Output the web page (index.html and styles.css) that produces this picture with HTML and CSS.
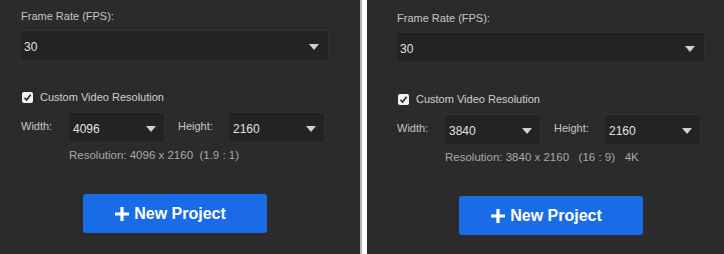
FILE: index.html
```html
<!DOCTYPE html>
<html lang="en">
<head>
    <meta charset="UTF-8">
    <meta name="viewport" content="width=device-width, initial-scale=1.0">
    <title>New Project Settings</title>
    <link rel="stylesheet" href="styles.css">
</head>
<body>
    <div class="compare">
        <section class="panel panel-left">
            <div class="field-label">Frame Rate (FPS):</div>
            <div class="select select-wide">
                <span class="select-value">30</span>
                <span class="arrow"></span>
            </div>

            <label class="check-row">
                <span class="check">
                    <svg width="9" height="9" viewBox="0 0 9 9"><path d="M1.5 4.8 L3.6 7 L7.6 1.8" fill="none" stroke="#222" stroke-width="1.6"/></svg>
                </span>
                Custom Video Resolution
            </label>

            <div class="size-row">
                <span class="size-label">Width:</span>
                <div class="select select-small">
                    <span class="select-value">4096</span>
                    <span class="arrow"></span>
                </div>
                <span class="size-label size-label-h">Height:</span>
                <div class="select select-small">
                    <span class="select-value">2160</span>
                    <span class="arrow"></span>
                </div>
            </div>
            <div class="res-info">Resolution: 4096 x 2160&nbsp;&nbsp;(1.9 : 1)</div>

            <button class="new-project">
                <svg width="14" height="14" viewBox="0 0 14 14"><path d="M7 0 V14 M0 7 H14" stroke="#fff" stroke-width="3.2"/></svg>
                New Project
            </button>
        </section>

        <div class="divider"></div>

        <section class="panel panel-right">
            <div class="field-label">Frame Rate (FPS):</div>
            <div class="select select-wide">
                <span class="select-value">30</span>
                <span class="arrow"></span>
            </div>

            <label class="check-row">
                <span class="check">
                    <svg width="9" height="9" viewBox="0 0 9 9"><path d="M1.5 4.8 L3.6 7 L7.6 1.8" fill="none" stroke="#222" stroke-width="1.6"/></svg>
                </span>
                Custom Video Resolution
            </label>

            <div class="size-row">
                <span class="size-label">Width:</span>
                <div class="select select-small">
                    <span class="select-value">3840</span>
                    <span class="arrow"></span>
                </div>
                <span class="size-label size-label-h">Height:</span>
                <div class="select select-small">
                    <span class="select-value">2160</span>
                    <span class="arrow"></span>
                </div>
            </div>
            <div class="res-info">Resolution: 3840 x 2160&nbsp;&nbsp;&nbsp;(16 : 9)&nbsp;&nbsp;&nbsp;4K</div>

            <button class="new-project">
                <svg width="14" height="14" viewBox="0 0 14 14"><path d="M7 0 V14 M0 7 H14" stroke="#fff" stroke-width="3.2"/></svg>
                New Project
            </button>
        </section>
    </div>
</body>
</html>
```

FILE: styles.css
```css
body {
    margin: 0;
    background: #2b2b2b;
    font-family: "Liberation Sans", Arial, sans-serif;
    font-size: 11px;
    color: #c6c6c6;
}
.compare {
    display: flex;
    width: 724px;
    height: 254px;
}
.panel {
    background: #2b2b2b;
    display: flex;
    flex-direction: column;
    width: 309px;
}
.panel-left {
    padding: 9px 31px 0 20px;
}
.panel-right {
    padding: 11px 19px 0 29px;
}
.divider {
    width: 5px;
    background: #ffffff;
    border-left: 2px solid #b4b4b4;
}
.field-label {
    line-height: 15px;
    padding-left: 1px;
}
.select {
    display: flex;
    align-items: center;
    justify-content: space-between;
    box-sizing: border-box;
    height: 31px;
    background: #232323;
    border: 1px solid #303030;
    border-radius: 2px;
    color: #e2e2e2;
    font-size: 12px;
}
.select-wide {
    margin-top: 6px;
    padding: 2px 9px 0 3px;
}
.select-small {
    width: 97px;
    padding: 2px 8px 0 4px;
}
.arrow {
    width: 0;
    height: 0;
    border-left: 5px solid transparent;
    border-right: 5px solid transparent;
    border-top: 6px solid #d0d0d0;
}
.check-row {
    display: flex;
    align-items: center;
    gap: 7px;
    margin-top: 28px;
    height: 16px;
    padding-left: 2px;
    color: #cfcfcf;
}
.check {
    display: flex;
    align-items: center;
    justify-content: center;
    width: 11px;
    height: 11px;
    background: #f2f2f2;
    border-radius: 2px;
}
.size-row {
    display: flex;
    align-items: center;
    margin-top: 7px;
}
.size-label {
    width: 48px;
    padding-left: 1px;
    padding-bottom: 3px;
    box-sizing: border-box;
}
.size-label-h {
    width: 51px;
    margin-left: 12px;
}
.res-info {
    margin-top: 5px;
    margin-left: 49px;
    line-height: 15px;
    font-size: 11.5px;
    color: #a9a9a9;
}
.new-project {
    align-self: center;
    display: flex;
    align-items: center;
    justify-content: center;
    gap: 5px;
    width: 184px;
    height: 39px;
    margin-top: 31px;
    padding: 0 8px 0 0;
    border: none;
    border-radius: 3px;
    background: #1a6be6;
    color: #ffffff;
    font-family: "Liberation Sans", Arial, sans-serif;
    font-size: 16px;
    font-weight: bold;
    cursor: pointer;
}
```
